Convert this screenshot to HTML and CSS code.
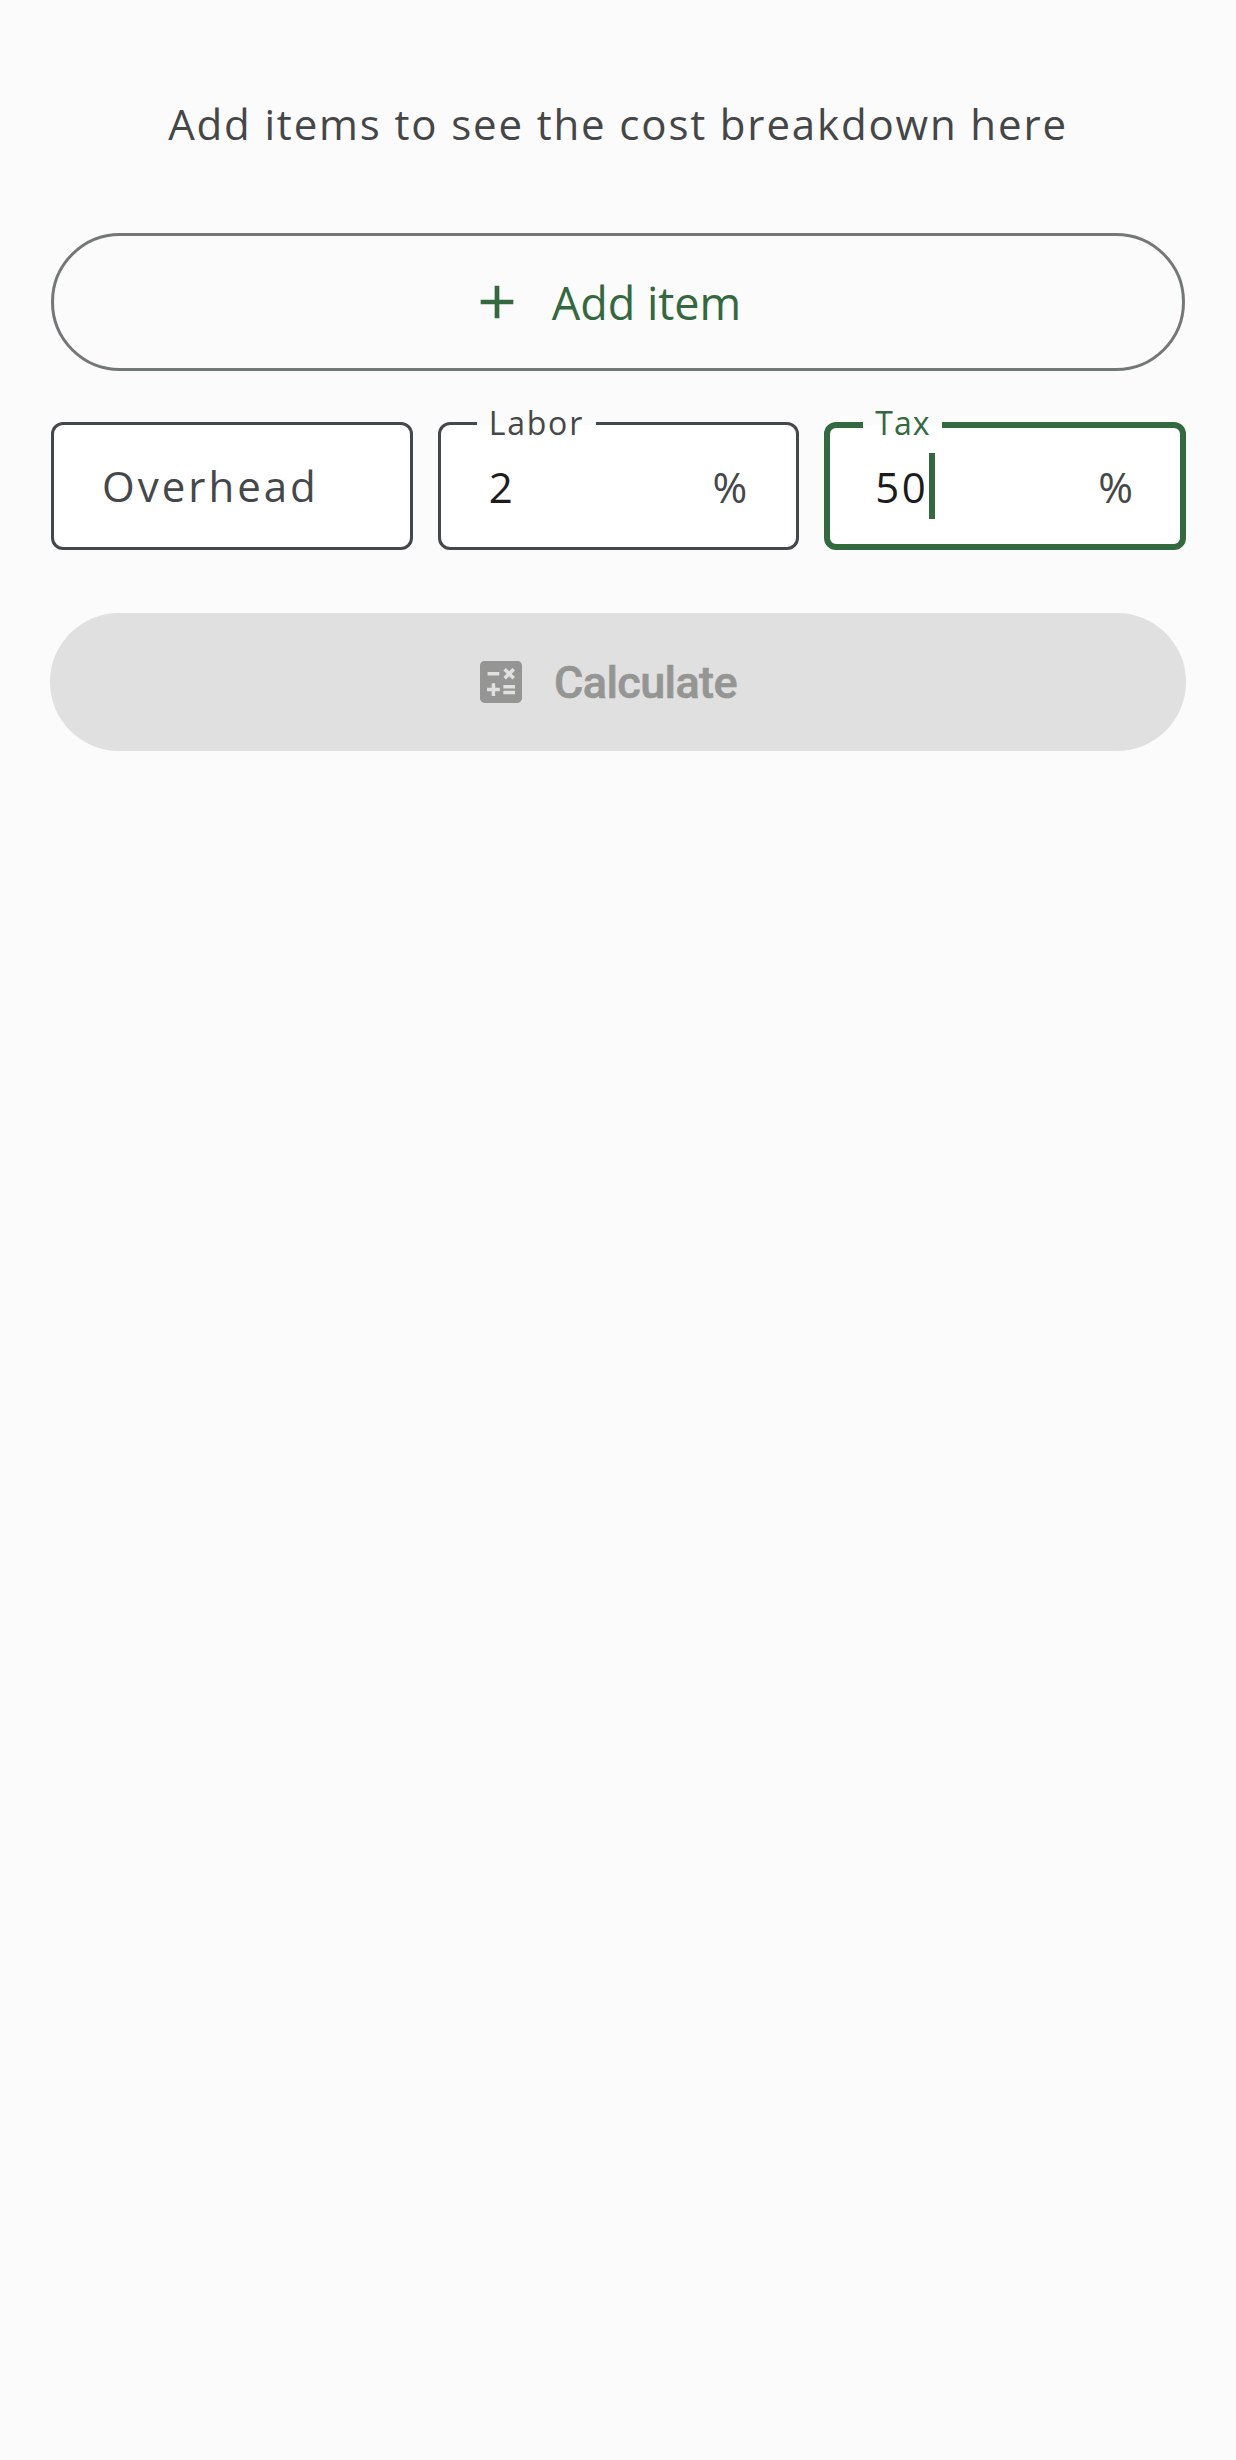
FILE: index.html
```html
<!DOCTYPE html>
<html lang="en">
<head>
    <meta charset="UTF-8">
    <title>Cost breakdown</title>
    <link rel="stylesheet" href="styles.css">
</head>
<body>
    <main class="screen">
        <p class="empty-msg">Add items to see the cost breakdown here</p>

        <button class="btn btn-outline">
            <svg class="btn-icon" viewBox="0 0 24 24"><path d="M19 13h-6v6h-2v-6H5v-2h6V5h2v6h6v2z"/></svg>
            <span>Add item</span>
        </button>

        <div class="fields">
            <div class="field">
                <span class="placeholder">Overhead</span>
            </div>
            <div class="field">
                <span class="field-label">Labor</span>
                <span class="value">2</span>
                <span class="suffix">%</span>
            </div>
            <div class="field field-focus">
                <span class="field-label">Tax</span>
                <span class="value">50</span><span class="caret"></span>
                <span class="suffix">%</span>
            </div>
        </div>

        <button class="btn btn-disabled">
            <svg class="btn-icon" viewBox="0 0 24 24"><path d="M19 3H5c-1.1 0-2 .9-2 2v14c0 1.1.9 2 2 2h14c1.1 0 2-.9 2-2V5c0-1.1-.9-2-2-2zm-5.97 4.06L14.09 6l1.41 1.41L16.91 6l1.06 1.06-1.41 1.41 1.41 1.41-1.06 1.06-1.41-1.4-1.41 1.41-1.06-1.06 1.41-1.41-1.41-1.42zm-6.78.66h5v1.5h-5v-1.5zM11.5 16h-2v2H8v-2H6v-1.5h2v-2h1.5v2h2V16zm6.5 1.25h-5v-1.5h5v1.5zm0-2.5h-5v-1.5h5v1.5z"/></svg>
            <span>Calculate</span>
        </button>
    </main>
</body>
</html>
```

FILE: styles.css
```css
body {
    margin: 0;
    background-color: #fbfbfb;
    font-family: "Open Sans", sans-serif;
}
.screen {
    display: flex;
    flex-direction: column;
    min-height: 2460px;
    box-sizing: border-box;
    padding: 0 50px;
}
.empty-msg {
    margin: 95px 0 80px;
    height: 58px;
    line-height: 58px;
    font-size: 42px;
    letter-spacing: 1.85px;
    text-align: center;
    color: #444647;
}
.btn {
    display: flex;
    align-items: center;
    justify-content: center;
    gap: 27px;
    height: 138px;
    padding: 0 26px 0 0;
    border-radius: 69px;
    box-sizing: border-box;
    font-family: inherit;
    font-size: 45px;
}
.btn-icon {
    width: 56px;
    height: 56px;
    fill: currentColor;
}
.btn-outline {
    margin: 0 1px;
    background: none;
    border: 3px solid #747778;
    color: #33693f;
}
.btn-disabled {
    gap: 25px;
    margin-top: 63px;
    background-color: #e0e0e0;
    border: none;
    color: #959694;
    font-family: Roboto, sans-serif;
    font-size: 45px;
    font-weight: 500;
    letter-spacing: -0.6px;
    -webkit-text-stroke: 0.6px #959694;
}
.fields {
    display: grid;
    grid-template-columns: repeat(3, 1fr);
    gap: 25px;
    margin: 51px 0 0 1px;
}
.field {
    position: relative;
    display: flex;
    align-items: center;
    height: 128px;
    padding: 0 49px 0 48px;
    box-sizing: border-box;
    background-color: #fff;
    border: 3px solid #45484a;
    border-radius: 12px;
    font-size: 42px;
}
.placeholder {
    margin-top: -2px;
    color: #45484a;
    letter-spacing: 3px;
}
.value {
    color: #1c1c1c;
    letter-spacing: 2.5px;
}
.suffix {
    margin-left: auto;
    color: #45484a;
}
.field-label {
    position: absolute;
    top: -24px;
    left: 36px;
    padding: 0 12px;
    background: linear-gradient(#fbfbfb 24px, #fff 24px);
    font-size: 32px;
    line-height: 44px;
    letter-spacing: 1.8px;
    color: #45484a;
}
.field-focus {
    border: 6px solid #33693f;
    padding: 0 47px 0 45px;
}
.field-focus .field-label {
    top: -27px;
    left: 33px;
    color: #33693f;
    letter-spacing: 1px;
}
.caret {
    width: 6px;
    height: 66px;
    margin-left: 1px;
    background-color: #33693f;
}
```
